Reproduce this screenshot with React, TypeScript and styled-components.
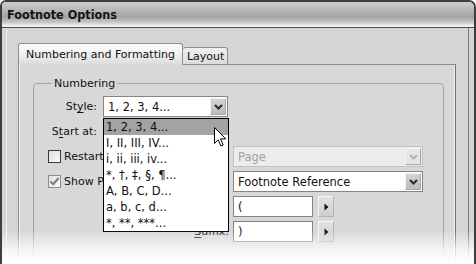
import React from 'react'
import styled, { createGlobalStyle } from 'styled-components'

const STYLES = [
  '1, 2, 3, 4...',
  'I, II, III, IV...',
  'i, ii, iii, iv...',
  '*, †, ‡, §, ¶...',
  'A, B, C, D...',
  'a, b, c, d...',
  '*, **, ***...',
]

export default function App() {
  return (
    <>
      <GlobalStyle />
      <Window>
        <TitleBar>Footnote Options</TitleBar>
        <Client>
          <Frame>
            <Tabs>
              <Tab $active>Numbering and Formatting</Tab>
              <Tab>Layout</Tab>
            </Tabs>
            <TabPanel>
              <GroupBox>
                <Legend>Numbering</Legend>
                <Rows>
                  <Row>
                    <Label>
                      St<u>y</u>le:
                    </Label>
                    <Anchor>
                      <Select $width={125}>
                        <SelectText>1, 2, 3, 4...</SelectText>
                        <DropButton>
                          <Chevron />
                        </DropButton>
                      </Select>
                      <DropList>
                        {STYLES.map((s, i) => (
                          <ListItem key={s} $selected={i === 0}>
                            {s}
                          </ListItem>
                        ))}
                        <Cursor />
                      </DropList>
                    </Anchor>
                  </Row>
                  <Row>
                    <Label>
                      S<u>t</u>art at:
                    </Label>
                    <TextBox $width={60} />
                  </Row>
                  <Row>
                    <WideCell>
                      <CheckBox />
                      <CheckText>Restart Numbering Every:</CheckText>
                    </WideCell>
                    <Select $width={190} $disabled>
                      <SelectText>Page</SelectText>
                      <DropButton $disabled>
                        <Chevron $disabled />
                      </DropButton>
                    </Select>
                  </Row>
                  <Row>
                    <WideCell>
                      <CheckBox $checked $dim />
                      <CheckText>Show Prefix/Suffix in:</CheckText>
                    </WideCell>
                    <Select $width={190}>
                      <SelectText>Footnote Reference</SelectText>
                      <DropButton>
                        <Chevron />
                      </DropButton>
                    </Select>
                  </Row>
                  <Row>
                    <WideLabel>
                      <u>P</u>refix:
                    </WideLabel>
                    <TextBox $width={80}>(</TextBox>
                    <ArrowButton>
                      <Triangle />
                    </ArrowButton>
                  </Row>
                  <Row>
                    <WideLabel>
                      <u>S</u>uffix:
                    </WideLabel>
                    <TextBox $width={80}>)</TextBox>
                    <ArrowButton>
                      <Triangle />
                    </ArrowButton>
                  </Row>
                </Rows>
              </GroupBox>
            </TabPanel>
          </Frame>
        </Client>
        <Fade />
      </Window>
    </>
  )
}

function Chevron({ $disabled }: { $disabled?: boolean }) {
  return (
    <svg width="9" height="6" viewBox="0 0 9 6">
      <path d="M1 1 L4.5 4.5 L8 1" fill="none" stroke={$disabled ? '#b4b4b4' : '#2a2a2a'} strokeWidth="2" />
    </svg>
  )
}

function Triangle() {
  return (
    <svg width="5" height="8" viewBox="0 0 5 8">
      <path d="M0.5 0.5 L4.5 4 L0.5 7.5 Z" fill="#111" />
    </svg>
  )
}

function Cursor() {
  return (
    <CursorSvg width="13" height="21" viewBox="0 0 13 21">
      <path
        d="M0.5 0.5 L0.5 16.5 L4.2 12.8 L6.8 19 L9.2 18 L6.6 11.9 L11.8 11.9 Z"
        fill="#fff"
        stroke="#000"
        strokeWidth="1"
        strokeLinejoin="miter"
      />
    </CursorSvg>
  )
}

const GlobalStyle = createGlobalStyle`
  html, body {
    margin: 0;
    padding: 0;
    background: #fff;
    overflow: hidden;
  }
`

const Window = styled.div`
  position: relative;
  box-sizing: border-box;
  width: 476px;
  height: 264px;
  display: flex;
  flex-direction: column;
  overflow: hidden;
  background: #d5d5d5;
  border: 2px solid #3e3e3e;
  border-bottom: none;
  border-radius: 6px 7px 0 0;
  font-family: 'DejaVu Sans', Verdana, sans-serif;
  font-size: 11px;
  color: #111;
`

const TitleBar = styled.div`
  height: 25px;
  flex: none;
  display: flex;
  align-items: center;
  padding-left: 5px;
  font-family: 'DejaVu Sans Condensed', 'DejaVu Sans', sans-serif;
  font-stretch: condensed;
  font-weight: bold;
  font-size: 12.5px;
  color: #141414;
  background: linear-gradient(to bottom, #cdcdcd 0%, #b6b6b6 35%, #a4a4a4 60%, #c4c4c4 80%, #f2f2f2 96%);
  border-bottom: 1px solid #4a4a4a;
`

const Client = styled.div`
  flex: 1;
  display: flex;
  padding: 0 5px 0 4px;
`

const Frame = styled.div`
  flex: 1;
  display: flex;
  flex-direction: column;
  padding: 16px 12px 0 11px;
  border-left: 1px solid #f2f2f2;
  border-right: 1px solid #7c7c7c;
`

const Tabs = styled.div`
  display: flex;
  align-items: flex-end;
  height: 21px;
  position: relative;
  z-index: 1;
  margin-bottom: -1px;
`

const Tab = styled.div<{ $active?: boolean }>`
  box-sizing: border-box;
  height: ${p => (p.$active ? 22 : 18)}px;
  padding: ${p => (p.$active ? '0 7px 0 7px' : '0 3px 0 4px')};
  display: flex;
  align-items: center;
  border: 1px solid #8e8e8e;
  border-bottom: ${p => (p.$active ? 'none' : '1px solid #8e8e8e')};
  border-left: ${p => (p.$active ? '1px solid #8e8e8e' : 'none')};
  border-radius: 3px 3px 0 0;
  background: ${p =>
    p.$active ? 'linear-gradient(to bottom, #fdfdfd, #ececec 60%, #dadada)' : 'linear-gradient(to bottom, #f0f0f0, #dcdcdc)'};
  color: #111;
  white-space: nowrap;
`

const TabPanel = styled.div`
  flex: 1;
  padding: 12px 11px 0 14px;
  background: #d8d8d8;
  border: 1px solid #8e8e8e;
  border-right-color: #6e6e6e;
  border-bottom: none;
  box-shadow: inset -1px 0 #f2f2f2, inset 1px 0 #f2f2f2;
`

const GroupBox = styled.fieldset`
  margin: 0;
  padding: 6px 10px 30px 14px;
  border: 1px solid #a3a3a3;
  border-radius: 4px;
  min-width: 0;
`

const Legend = styled.legend`
  margin-left: 4px;
  padding: 0 2px;
  line-height: 13px;
  font-size: 11px;
  color: #111;
`

const Rows = styled.div`
  display: flex;
  flex-direction: column;
  gap: 4px;
`

const Row = styled.div`
  display: flex;
  align-items: center;
  height: 21px;
`

const Label = styled.div`
  width: 49px;
  margin-right: 6px;
  text-align: right;
  white-space: nowrap;
  u {
    text-decoration-thickness: 1px;
    text-underline-offset: 2px;
  }
`

const WideLabel = styled(Label)`
  width: 181px;
  margin-right: 4px;
`

const WideCell = styled.div`
  width: 181px;
  margin-right: 4px;
  display: flex;
  align-items: center;
  gap: 3px;
  overflow: hidden;
  white-space: nowrap;
`

const CheckBox = styled.div<{ $checked?: boolean; $dim?: boolean }>`
  flex: none;
  width: 13px;
  height: 13px;
  box-sizing: border-box;
  border: 1px solid ${p => (p.$dim ? '#8c8c8c' : '#3a3a3a')};
  background: linear-gradient(135deg, #dedede, #fbfbfb);
  position: relative;
  &::after {
    content: '';
    display: ${p => (p.$checked ? 'block' : 'none')};
    position: absolute;
    left: 3px;
    top: 0px;
    width: 3px;
    height: 7px;
    border: solid #7a7a7a;
    border-width: 0 2px 2px 0;
    transform: rotate(40deg);
  }
`

const CheckText = styled.span`
  color: #111;
`

const Anchor = styled.div`
  position: relative;
  height: 21px;
`

const Select = styled.div<{ $width: number; $disabled?: boolean }>`
  box-sizing: border-box;
  width: ${p => p.$width}px;
  height: 21px;
  display: flex;
  align-items: center;
  border: 1px solid ${p => (p.$disabled ? '#c2c2c2' : '#858585')};
  background: ${p => (p.$disabled ? '#ececec' : '#fff')};
  color: ${p => (p.$disabled ? '#a2a2a2' : '#111')};
  padding: 1px;
`

const SelectText = styled.span`
  flex: 1;
  padding-left: 3px;
  font-size: 11.5px;
  white-space: nowrap;
  overflow: hidden;
`

const DropButton = styled.div<{ $disabled?: boolean }>`
  flex: none;
  width: 16px;
  height: 17px;
  display: flex;
  align-items: center;
  justify-content: center;
  box-sizing: border-box;
  border: 1px solid ${p => (p.$disabled ? '#f4f4f4' : '#f2f2f2')};
  border-right-color: #a8a8a8;
  border-bottom-color: #a8a8a8;
  background: ${p => (p.$disabled ? '#e6e6e6' : 'linear-gradient(to bottom, #d4d4d4, #bcbcbc)')};
`

const DropList = styled.div`
  position: absolute;
  left: 0;
  top: 22px;
  z-index: 5;
  box-sizing: border-box;
  width: 126px;
  height: 114px;
  overflow: hidden;
  border: 1px solid #000;
  background: #fff;
`

const ListItem = styled.div<{ $selected?: boolean }>`
  height: 16px;
  line-height: 16px;
  padding-left: 2px;
  font-size: 11.5px;
  white-space: nowrap;
  background: ${p => (p.$selected ? '#a3a3a3' : 'transparent')};
  color: #111;
`

const CursorSvg = styled.svg`
  position: absolute;
  left: 110px;
  top: 8px;
`

const TextBox = styled.div<{ $width: number }>`
  box-sizing: border-box;
  width: ${p => p.$width}px;
  height: 21px;
  display: flex;
  align-items: center;
  padding-left: 4px;
  border: 1px solid #858585;
  background: #fff;
  font-size: 11.5px;
`

const ArrowButton = styled.div`
  box-sizing: border-box;
  margin-left: 5px;
  width: 16px;
  height: 21px;
  display: flex;
  align-items: center;
  justify-content: center;
  background: linear-gradient(to bottom, #e2e2e2, #cfcfcf);
  border: 1px solid #f6f6f6;
  border-right-color: #b4b4b4;
  border-bottom-color: #b4b4b4;
`

const Fade = styled.div`
  position: absolute;
  left: -2px;
  right: -2px;
  bottom: 0;
  height: 34px;
  z-index: 10;
  background: linear-gradient(to bottom, rgba(255, 255, 255, 0) 0%, rgba(255, 255, 255, 0.75) 60%, #fff 95%);
  pointer-events: none;
`
